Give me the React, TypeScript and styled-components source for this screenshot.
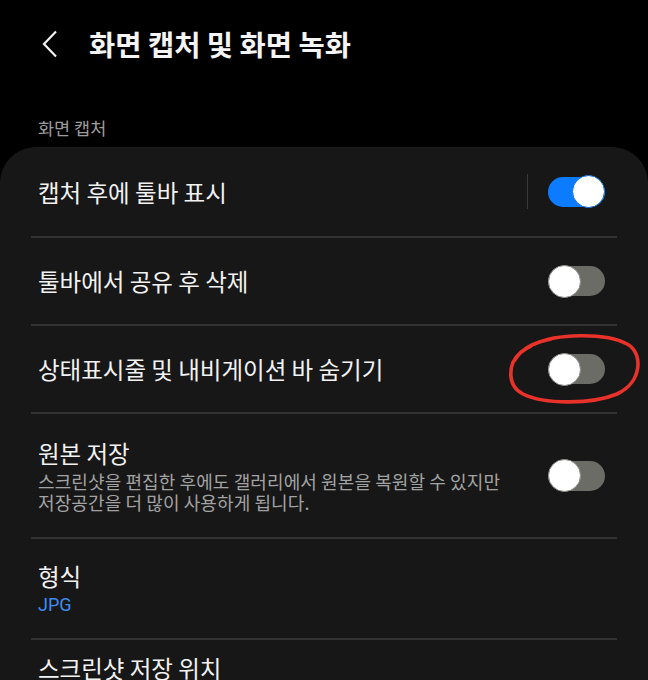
import React from "react";
import styled, { createGlobalStyle } from "styled-components";

const Global = createGlobalStyle`
  html, body { margin: 0; padding: 0; background: #000; }
  body { font-family: "Noto Sans CJK KR", "Noto Sans", sans-serif; color: #f2f2f2; }
`;

const Page = styled.div`
  width: 648px;
  height: 680px;
  overflow: hidden;
  background: #000;
`;

const Header = styled.div`
  height: 88px;
  display: flex;
  align-items: center;
  padding-left: 40px;
  gap: 29px;
`;

const BackButton = styled.div`
  width: 20px;
  height: 30px;
  display: flex;
  align-items: center;
  justify-content: center;
`;

const Title = styled.h1`
  margin: 0;
  font-size: 28.5px;
  font-weight: 700;
  color: #f4f4f4;
  line-height: 34px;
`;

const SectionLabel = styled.div`
  padding: 28px 0 7px 38px;
  font-size: 17.5px;
  line-height: 24px;
  color: #9c9c9c;
`;

const Card = styled.div`
  background: #171717;
  border-radius: 36px 36px 0 0;
  overflow: hidden;
`;

const Row = styled.div<{ $h: number; $top?: number }>`
  box-sizing: border-box;
  height: ${(p) => p.$h}px;
  display: flex;
  align-items: ${(p) => (p.$top !== undefined ? "flex-start" : "center")};
  padding: ${(p) => p.$top ?? 0}px 43px 0 38px;
`;

const RowText = styled.div`
  flex: 1;
  display: flex;
  flex-direction: column;
`;

const RowTitle = styled.div`
  font-size: 23.5px;
  line-height: 28px;
  color: #f2f2f2;
  white-space: nowrap;
`;

const RowSub = styled.div`
  font-size: 18px;
  line-height: 20.5px;
  color: #a3a3a3;
  margin-top: 4.5px;
  letter-spacing: 0.1px;
  white-space: nowrap;
`;

const RowValue = styled.div`
  font-family: Roboto, "Noto Sans", sans-serif;
  font-size: 18px;
  line-height: 22px;
  color: #3f8cf0;
  margin-top: 4px;
`;

const Divider = styled.div`
  height: 2px;
  margin: 0 31px;
  background: #333333;
`;

const VLine = styled.div`
  width: 1px;
  height: 35px;
  background: #3a3a3a;
  margin-right: 20px;
`;

const Track = styled.div<{ $on: boolean }>`
  position: relative;
  flex: none;
  width: 57px;
  height: 30px;
  border-radius: 15px;
  background: ${(p) => (p.$on ? "#0b7cff" : "#6c6c67")};
`;

const Thumb = styled.div<{ $on: boolean }>`
  position: absolute;
  top: -1.5px;
  left: ${(p) => (p.$on ? "24px" : "0px")};
  width: 33px;
  height: 33px;
  box-sizing: border-box;
  border-radius: 50%;
  background: #ffffff;
  border: 1.5px solid ${(p) => (p.$on ? "#0b6fe0" : "#8a8a86")};
`;

const Annotation = styled.svg`
  position: absolute;
  left: 505px;
  top: 332px;
  pointer-events: none;
`;

const Toggle = ({ on }: { on: boolean }) => (
  <Track $on={on}>
    <Thumb $on={on} />
  </Track>
);

export default function App() {
  return (
    <Page>
      <Global />
      <Header>
        <BackButton>
          <svg width="16" height="28" viewBox="0 0 16 28">
            <polyline points="14,1.5 2,14 14,26.5" fill="none" stroke="#f2f2f2" strokeWidth="2.2" strokeLinejoin="miter" />
          </svg>
        </BackButton>
        <Title>화면 캡처 및 화면 녹화</Title>
      </Header>
      <SectionLabel>화면 캡처</SectionLabel>
      <Card>
        <Row $h={89}>
          <RowText>
            <RowTitle>캡처 후에 툴바 표시</RowTitle>
          </RowText>
          <VLine />
          <Toggle on={true} />
        </Row>
        <Divider />
        <Row $h={86}>
          <RowText>
            <RowTitle>툴바에서 공유 후 삭제</RowTitle>
          </RowText>
          <Toggle on={false} />
        </Row>
        <Divider />
        <Row $h={86}>
          <RowText>
            <RowTitle>상태표시줄 및 내비게이션 바 숨기기</RowTitle>
          </RowText>
          <Toggle on={false} />
        </Row>
        <Divider />
        <Row $h={123}>
          <RowText>
            <RowTitle>원본 저장</RowTitle>
            <RowSub>
              스크린샷을 편집한 후에도 갤러리에서 원본을 복원할 수 있지만
              <br />
              저장공간을 더 많이 사용하게 됩니다.
            </RowSub>
          </RowText>
          <Toggle on={false} />
        </Row>
        <Divider />
        <Row $h={99}>
          <RowText>
            <RowTitle>형식</RowTitle>
            <RowValue>JPG</RowValue>
          </RowText>
        </Row>
        <Divider />
        <Row $h={60} $top={14}>
          <RowText>
            <RowTitle>스크린샷 저장 위치</RowTitle>
          </RowText>
        </Row>
      </Card>
      <Annotation width="140" height="76" viewBox="0 0 140 76">
        <path
          d="M 30 12 C 50 2, 100 0, 122 12 C 138 20, 138 50, 112 62 C 88 72, 40 73, 18 62 C 2 54, 2 32, 16 20 C 24 13, 36 9, 46 7 M 9 29 C 13 22, 19 17, 26 14"
          fill="none"
          stroke="#e8322a"
          strokeWidth="3.6"
          strokeLinecap="round"
        />
      </Annotation>
    </Page>
  );
}
